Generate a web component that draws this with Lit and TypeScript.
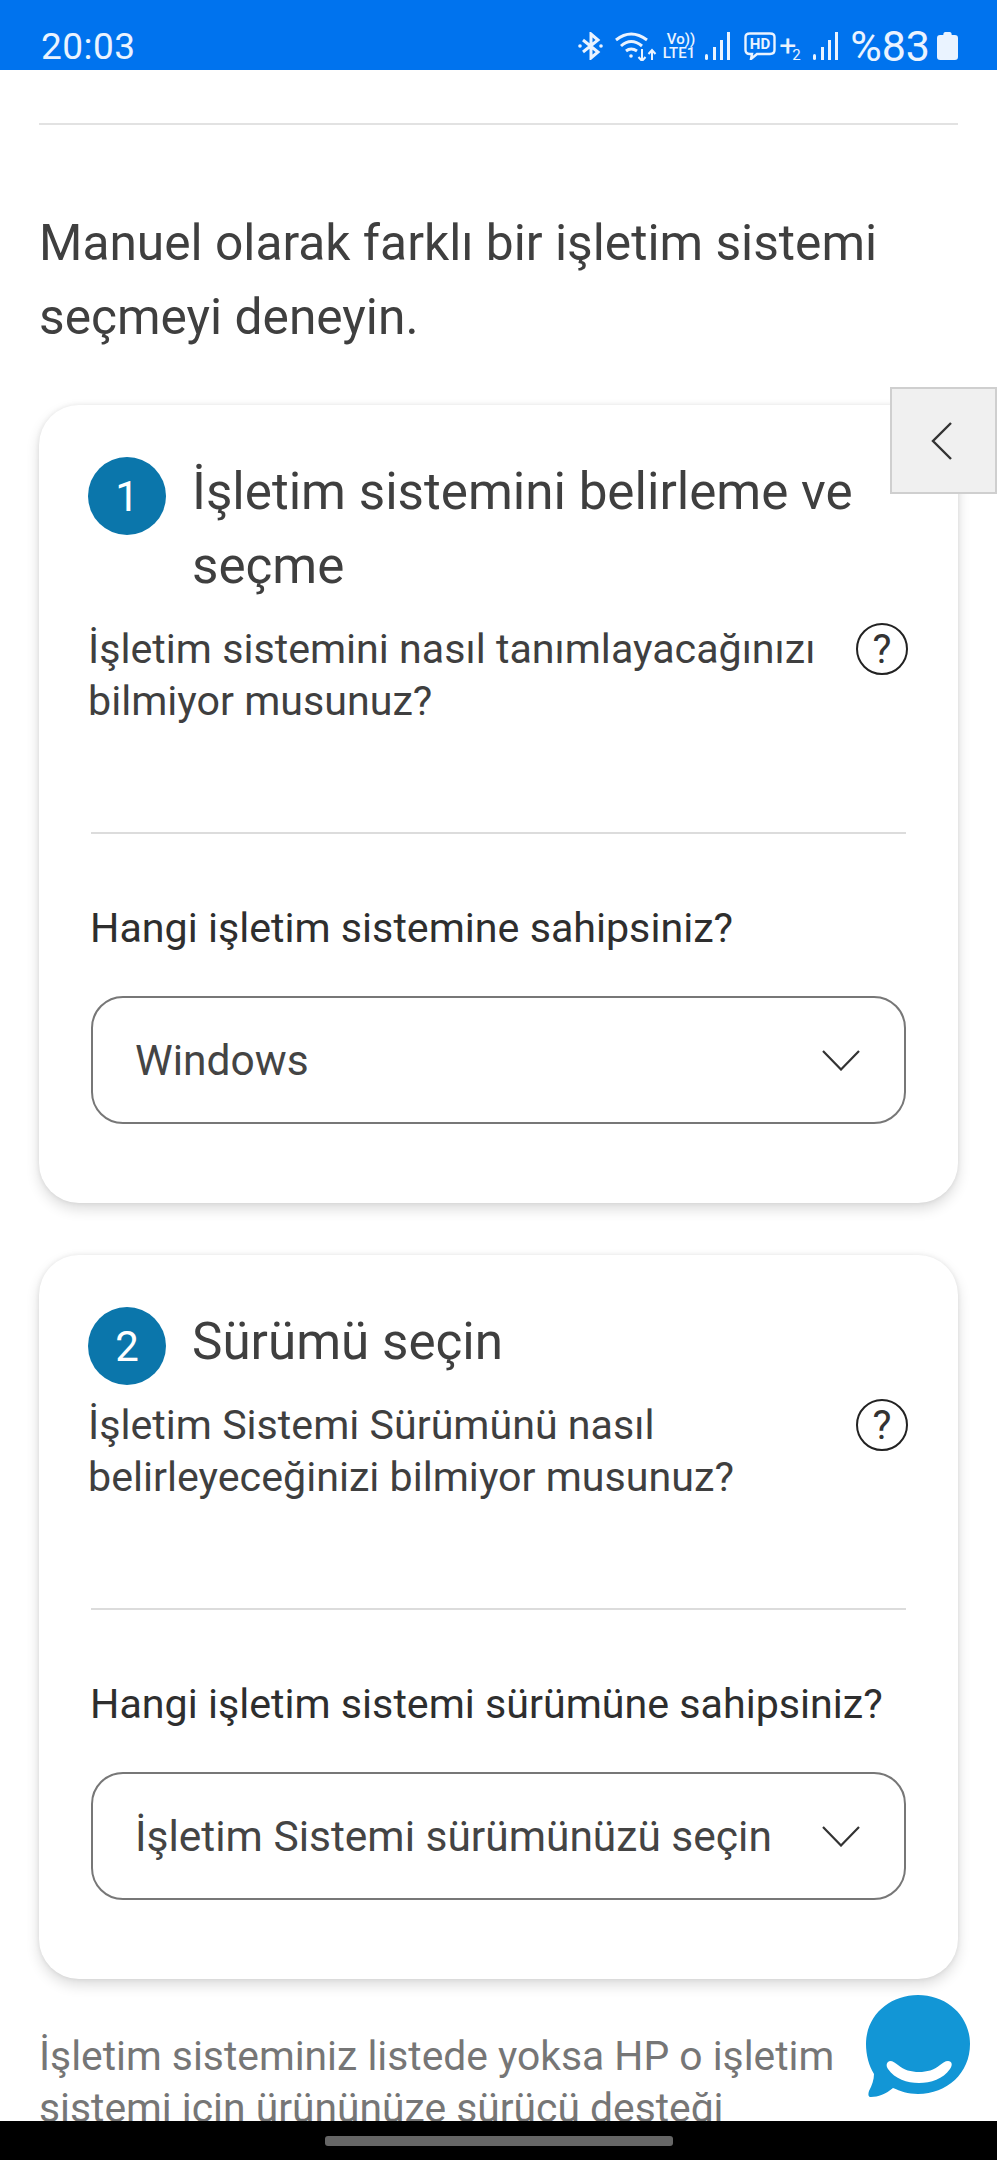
import { LitElement, css, html, svg } from "lit";
import { customElement, property } from "lit/decorators.js";

const chevronDown = html`<svg class="chevron" width="38" height="21" viewBox="0 0 38 21" fill="none" stroke="#333" stroke-width="2.2"><path d="M1 1 L19 19.500 L37 1" /></svg>`;

@customElement("step-card")
export class StepCard extends LitElement {
    @property({ type: Number }) step = 1;
    @property({ type: String, attribute: "step-title" }) stepTitle = "";
    @property({ type: String }) help = "";
    @property({ type: String }) question = "";
    @property({ type: String }) choice = "";

    render() {
        return html`
            <div class="card">
                <div class="head">
                    <span class="badge">${this.step}</span>
                    <h2>${this.stepTitle}</h2>
                </div>
                <div class="help">
                    <p>${this.help}</p>
                    <span class="q">?</span>
                </div>
                <div class="rule"></div>
                <div class="label">${this.question}</div>
                <div class="select">
                    <span>${this.choice}</span>
                    ${chevronDown}
                </div>
            </div>
        `;
    }

    static styles = css`
        :host {
            display: block;
            font-family: Roboto, "Liberation Sans", sans-serif;
            color: #3f3f3f;
        }

        .card {
            background: #fff;
            border-radius: 40px;
            padding: 50px 52px 79px 50px;
            box-shadow: 0 6px 14px rgba(0, 0, 0, 0.14), 0 0 5px rgba(0, 0, 0, 0.08);
        }

        .head {
            display: flex;
            align-items: flex-start;
            gap: 26px;
        }

        /* negative bottom margin: a one line title sets the row height, not the circle */
        .badge {
            flex: none;
            width: 78px;
            height: 78px;
            margin: 2px 0 -6px -1px;
            border-radius: 50%;
            background: #0b76ab;
            color: #fff;
            font-size: 42px;
            display: flex;
            align-items: center;
            justify-content: center;
        }

        h2 {
            margin: 0;
            font-size: 51.2px;
            font-weight: 400;
            line-height: 74px;
        }

        .help {
            display: flex;
            justify-content: space-between;
            align-items: flex-start;
            margin-top: 20px;
        }

        .help p {
            margin: 0 0 0 -1px;
            width: 760px;
            font-size: 41.2px;
            line-height: 52px;
        }

        .q {
            flex: none;
            box-sizing: border-box;
            width: 52px;
            height: 52px;
            margin-right: -2px;
            border: 2px solid #222;
            border-radius: 50%;
            font-size: 40px;
            color: #333;
            display: flex;
            align-items: center;
            justify-content: center;
        }

        .rule {
            height: 2px;
            margin: 105px 0 0 2px;
            background: #dcdcdc;
        }

        .label {
            margin: 68px 0 0 1px;
            font-size: 41.2px;
            line-height: 52px;
            color: #2e2e2e;
        }

        .select {
            box-sizing: border-box;
            height: 128px;
            margin: 42px 0 0 2px;
            padding: 0 44px 0 42px;
            border: 2px solid #777;
            border-radius: 32px;
            display: flex;
            align-items: center;
            justify-content: space-between;
            font-size: 42.5px;
            color: #444;
        }

        .chevron {
            flex: none;
        }
    `;
}

@customElement("app-root")
export class AppRoot extends LitElement {
    render() {
        return html`
            <div class="screen">
                <div class="status">
                    <span class="clock">20:03</span>
                    <div class="icons">
                        <svg width="25" height="28" viewBox="0 0 25 28" fill="none" stroke="#eaf3ff" stroke-width="3">
                            <path d="M5 8 L20 20 L13 26 V2 L20 8 L5 20" />
                            <circle cx="2" cy="14" r="1.800" fill="#eaf3ff" stroke="none" />
                            <circle cx="23" cy="14" r="1.800" fill="#eaf3ff" stroke="none" />
                        </svg>
                        <svg class="m-wifi" width="42" height="30" viewBox="0 0 42 30" fill="none" stroke="#eaf3ff" stroke-width="3">
                            <path d="M1 9 Q16 -3 32 9" />
                            <path d="M6 15 Q16 6 27 15" />
                            <path d="M11 20 Q16 16 22 20" />
                            <circle cx="16" cy="25" r="1.800" fill="#eaf3ff" stroke="none" />
                            <path d="M27 18 V30 M23.500 26 L27 30 L30.500 26 M37 29 V19 M33.500 23 L37 19 L40.500 23" stroke-width="2" />
                        </svg>
                        <div class="volte"><span>Vo))</span><span>LTE1</span></div>
                        ${this.bars("m-bars1")}
                        <svg class="m-hd" width="32" height="28" viewBox="0 0 32 28" fill="none" stroke="#eaf3ff" stroke-width="2.400">
                            <path d="M8 22 H6 Q1.500 22 1.500 18 V5 Q1.500 1.500 6 1.500 H26 Q30.500 1.500 30.500 5 V18 Q30.500 22 26 22 H13 L7 27 Z" />
                            <text x="16" y="17" text-anchor="middle" font-size="15" font-weight="700" fill="#eaf3ff" stroke="none" font-family="Roboto, sans-serif">HD</text>
                        </svg>
                        <div class="plus"><span>+</span><span class="sub">2</span></div>
                        ${this.bars("m-bars2")}
                        <span class="pct">%83</span>
                        <svg class="m-batt" width="21" height="28" viewBox="0 0 20 28" preserveAspectRatio="none">
                            <path d="M6 3 Q6 0 8 0 H12 Q14 0 14 3 H17 Q20 3 20 6 V25 Q20 28 17 28 H3 Q0 28 0 25 V6 Q0 3 3 3 Z" fill="#eaf3ff" />
                        </svg>
                    </div>
                </div>
                <div class="content">
                    <div class="top-rule"></div>
                    <h1>Manuel olarak farklı bir işletim sistemi seçmeyi deneyin.</h1>
                    <div class="cards">
                        <step-card
                            step="1"
                            step-title="İşletim sistemini belirleme ve seçme"
                            help="İşletim sistemini nasıl tanımlayacağınızı bilmiyor musunuz?"
                            question="Hangi işletim sistemine sahipsiniz?"
                            choice="Windows"
                        ></step-card>
                        <step-card
                            step="2"
                            step-title="Sürümü seçin"
                            help="İşletim Sistemi Sürümünü nasıl belirleyeceğinizi bilmiyor musunuz?"
                            question="Hangi işletim sistemi sürümüne sahipsiniz?"
                            choice="İşletim Sistemi sürümünüzü seçin"
                        ></step-card>
                    </div>
                    <p class="note">İşletim sisteminiz listede yoksa HP o işletim sistemi için ürününüze sürücü desteği sağlamıyor olabilir.</p>
                    <div class="tab">
                        <svg width="22" height="38" viewBox="0 0 22 38" fill="none" stroke="#333" stroke-width="2.400"><path d="M20 1 L2 19 L20 37" /></svg>
                    </div>
                    <svg class="chat" width="104" height="102" viewBox="0 0 104 102">
                        <path fill="#1296d6" d="M52 0 C81 0 104 21 104 49 C104 78 81 99 52 99 C42 99 34 96 27 93 C20 99 12 102 5 102 C2 102 2 99 3 96 C6 90 8 85 8 79 C3 71 0 60 0 49 C0 21 23 0 52 0 Z" />
                        <path fill="#fff" d="M24 66 C20 67 20 71 22 74 C29 84 41 88 53 88 C65 88 77 84 84 74 C87 70 86 66 82 66 C79 66 77 68 74 70 C68 75 61 77 53 77 C45 77 38 75 32 70 C29 68 27 66 24 66 Z" />
                    </svg>
                </div>
                <div class="nav"><span class="pill"></span></div>
            </div>
        `;
    }

    bars(cls: string) {
        return svg`<svg class=${cls} width="25" height="28" viewBox="0 0 25 28" fill="#eaf3ff">
            <rect x="0" y="22" width="3" height="6" rx="1.500" />
            <rect x="8" y="15" width="3" height="13" />
            <rect x="15" y="8" width="3" height="20" />
            <rect x="22" y="0" width="3" height="28" />
        </svg>`;
    }

    static styles = css`
        :host {
            display: block;
            font-family: Roboto, "Liberation Sans", sans-serif;
        }

        .screen {
            width: 997px;
            height: 2160px;
            display: flex;
            flex-direction: column;
            overflow: hidden;
            background: #fff;
        }

        .status {
            flex: none;
            box-sizing: border-box;
            height: 70px;
            padding: 22px 39px 0 41px;
            background: #0073ee;
            color: #eaf3ff;
            display: flex;
            align-items: center;
            justify-content: space-between;
        }

        .clock {
            font-size: 37px;
            letter-spacing: 0.5px;
        }

        .icons {
            display: flex;
            align-items: center;
        }

        .m-wifi {
            margin-left: 12px;
        }

        .volte {
            width: 33px;
            margin-left: 5px;
            display: flex;
            flex-direction: column;
            align-items: flex-end;
            font-size: 15px;
            line-height: 14px;
            font-weight: 500;
        }

        .m-bars1 {
            margin-left: 10px;
        }

        .m-hd {
            margin-left: 14px;
        }

        .plus {
            width: 21px;
            margin-left: 3px;
            display: flex;
            align-items: flex-end;
            font-size: 30px;
            line-height: 28px;
        }

        .plus .sub {
            font-size: 15px;
            line-height: 15px;
            margin-bottom: -3px;
            margin-left: -4px;
        }

        .m-bars2 {
            margin-left: 13px;
        }

        .pct {
            margin-left: 12px;
            font-size: 43px;
            line-height: 44px;
        }

        .m-batt {
            margin-left: 7px;
        }

        .content {
            position: relative;
            flex: 1;
            min-height: 0;
            overflow: hidden;
            padding: 53px 39px 0;
            color: #3f3f3f;
        }

        .top-rule {
            height: 2px;
            background: #e2e2e2;
        }

        h1 {
            margin: 81px 0 0;
            font-size: 49.700px;
            font-weight: 400;
            line-height: 74px;
        }

        .cards {
            display: flex;
            flex-direction: column;
            gap: 52px;
            margin-top: 51px;
        }

        .note {
            margin: 51px 0 0;
            width: 830px;
            font-size: 40.800px;
            line-height: 52px;
            color: #767676;
        }

        .tab {
            position: absolute;
            top: 317px;
            right: 0;
            box-sizing: border-box;
            width: 107px;
            height: 107px;
            padding-right: 4px;
            background: #f0f0f0;
            border: 2px solid #cfcfcf;
            display: flex;
            align-items: center;
            justify-content: center;
        }

        .chat {
            position: absolute;
            left: 866px;
            top: 1925px;
        }

        .nav {
            flex: none;
            height: 39px;
            background: #000;
            display: flex;
            justify-content: center;
            align-items: flex-start;
        }

        .pill {
            width: 348px;
            height: 10px;
            margin-top: 15px;
            border-radius: 3px;
            background: #666;
        }
    `;
}
